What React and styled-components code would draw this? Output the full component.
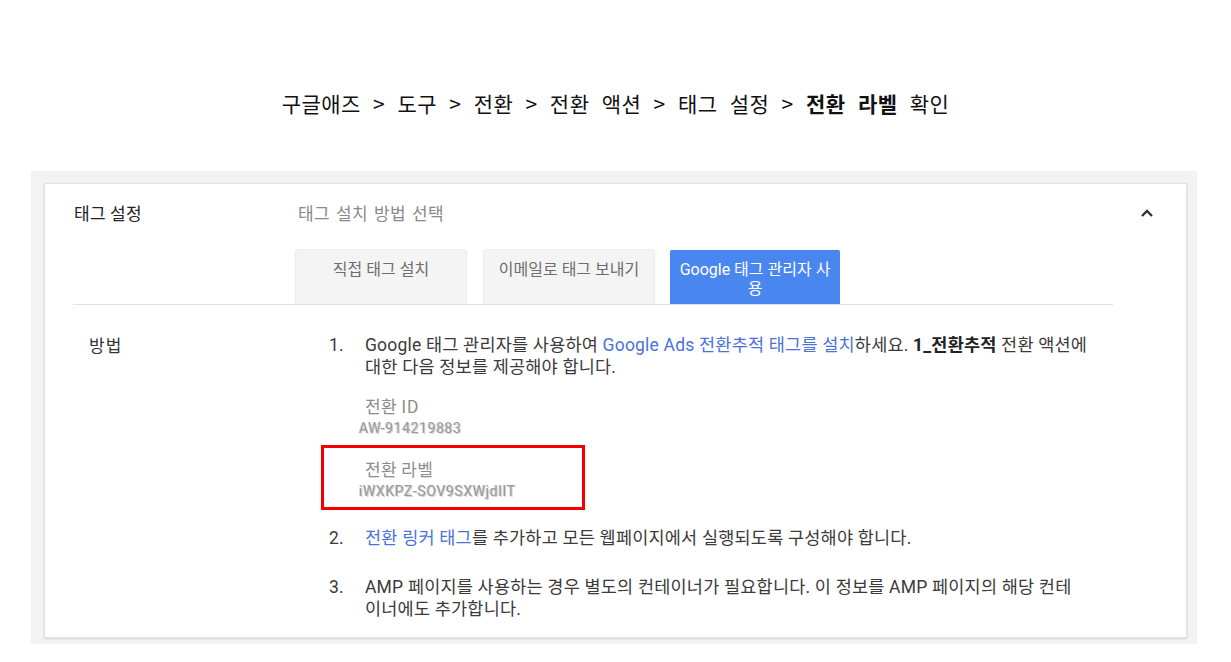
import React from "react";
import styled, { createGlobalStyle } from "styled-components";

const GlobalStyle = createGlobalStyle`
  html, body { margin: 0; padding: 0; background: #ffffff; }
  body { font-family: Roboto, "Noto Sans CJK KR", sans-serif; color: #333; }
`;

const Page = styled.div`
  width: 1231px;
  height: 662px;
  overflow: hidden;
  background: #fff;
`;

const Breadcrumb = styled.div`
  padding-top: 89px;
  height: 30px;
  text-align: center;
  font-family: "Noto Sans CJK KR", sans-serif;
  font-size: 21px;
  line-height: 28px;
  color: #111;
  letter-spacing: 0.5px;
  word-spacing: 7px;
  b { font-weight: 700; }
`;

const Panel = styled.div`
  margin: 52px 34px 0 31px;
  padding: 12px 10px 6px 13px;
  background: #f3f3f3;
`;

const Card = styled.div`
  background: #fff;
  border: 1px solid #e3e3e3;
  box-shadow: 0 1px 2px rgba(0, 0, 0, 0.12);
`;

const HeaderRow = styled.div`
  display: flex;
`;

const Header = styled.div`
  flex: 1;
  margin-left: 28px;
  display: flex;
  padding-top: 19px;
  border-bottom: 1px solid #e2e2e2;
`;

const SectionLabel = styled.div`
  width: 224px;
  padding-left: 1px;
  font-family: "Noto Sans CJK KR", sans-serif;
  font-size: 17px;
  line-height: 20px;
  letter-spacing: 0.3px;
  color: #222;
`;

const HeaderMain = styled.div`
  display: flex;
  flex-direction: column;
`;

const SubTitle = styled.div`
  font-family: "Noto Sans CJK KR", sans-serif;
  font-size: 17px;
  line-height: 20px;
  letter-spacing: 0.3px;
  word-spacing: 2px;
  color: #8a8a8a;
`;

const Tabs = styled.div`
  display: flex;
  gap: 18px;
  margin-top: 27px;
  margin-left: -2px;
`;

const Tab = styled.div`
  width: 170px;
  height: 54px;
  box-sizing: border-box;
  padding: 10px 8px 0;
  margin-left: ${(p) => (p.$active ? "-2px" : "0")};
  text-align: center;
  font-family: Roboto, "Noto Sans CJK KR", sans-serif;
  font-size: 16px;
  line-height: 19px;
  border-radius: 2px 2px 0 0;
  background: ${(p) => (p.$active ? "#4a86f0" : "#f4f4f4")};
  color: ${(p) => (p.$active ? "#ffffff" : "#6d6d6d")};
  box-shadow: ${(p) =>
    p.$active
      ? "0 0 1px rgba(0,0,0,0.2)"
      : "0 -1px 1px rgba(0,0,0,0.06), -1px 0 1px rgba(0,0,0,0.08), 1px 0 1px rgba(0,0,0,0.08)"};
`;

const ChevronCol = styled.div`
  width: 73px;
  display: flex;
  justify-content: center;
  padding-top: 24px;
  padding-right: 6px;
  box-sizing: border-box;
`;

const Body = styled.div`
  display: flex;
  padding: 29px 0 17px 44px;
`;

const BodyLabel = styled.div`
  width: 240px;
  font-family: "Noto Sans CJK KR", sans-serif;
  font-size: 17px;
  line-height: 22px;
  letter-spacing: 1px;
  color: #333;
`;

const Steps = styled.ol`
  list-style: none;
  margin: 0;
  padding: 0;
  width: 790px;
  display: flex;
  flex-direction: column;
`;

const Step = styled.li`
  display: flex;
  margin-top: ${(p) => p.$mt || 0}px;
  font-family: Roboto, "Noto Sans CJK KR", sans-serif;
  font-size: 17.5px;
  line-height: 22px;
  letter-spacing: 0.2px;
  color: #3a3a3a;
`;

const StepNum = styled.span`
  width: 36px;
  flex: none;
`;

const StepBody = styled.div`
  width: 754px;
`;

const Link = styled.span`
  color: #4a72d8;
`;

const Strong = styled.b`
  font-weight: 700;
  color: #222;
`;

const Field = styled.div`
  margin-top: ${(p) => p.$mt || 0}px;
`;

const FieldLabel = styled.div`
  font-family: "Noto Sans CJK KR", sans-serif;
  font-size: 17px;
  line-height: 22px;
  letter-spacing: 0.4px;
  color: #8c8c8c;
`;

const FieldValue = styled.div`
  font-family: Roboto, sans-serif;
  font-size: 14px;
  line-height: 22px;
  color: #9a9a9a;
  margin-left: -6px;
  letter-spacing: 0.6px;
  filter: blur(0.6px);
  text-shadow: 1px 1px 0 #ccd5e6, -1px 0 0 #e6d8ca;
`;

const Highlight = styled.div`
  margin: 6px 0 0 -44px;
  width: 264px;
  height: 65px;
  box-sizing: border-box;
  border: 3px solid #f20000;
  padding: 10px 0 0 41px;
`;

const ChevronUp = () => (
  <svg width="14" height="10" viewBox="0 0 14 10" aria-hidden="true">
    <polyline points="2,8 7,3 12,8" fill="none" stroke="#333" strokeWidth="2.4" />
  </svg>
);

export default function App() {
  return (
    <Page>
      <GlobalStyle />
      <Breadcrumb>
        구글애즈 &gt; 도구 &gt; 전환 &gt; 전환 액션 &gt; 태그 설정 &gt; <b>전환 라벨</b> 확인
      </Breadcrumb>
      <Panel>
        <Card>
          <HeaderRow>
            <Header>
              <SectionLabel>태그 설정</SectionLabel>
              <HeaderMain>
                <SubTitle>태그 설치 방법 선택</SubTitle>
                <Tabs>
                  <Tab>직접 태그 설치</Tab>
                  <Tab>이메일로 태그 보내기</Tab>
                  <Tab $active>Google 태그 관리자 사용</Tab>
                </Tabs>
              </HeaderMain>
            </Header>
            <ChevronCol>
              <ChevronUp />
            </ChevronCol>
          </HeaderRow>
          <Body>
            <BodyLabel>방법</BodyLabel>
            <Steps>
              <Step>
                <StepNum>1.</StepNum>
                <StepBody>
                  Google 태그 관리자를 사용하여 <Link>Google Ads 전환추적 태그를 설치</Link>하세요.{" "}
                  <Strong>1_전환추적</Strong> 전환 액션에
                  <br />
                  대한 다음 정보를 제공해야 합니다.
                  <Field $mt={17}>
                    <FieldLabel>전환 ID</FieldLabel>
                    <FieldValue>AW-914219883</FieldValue>
                  </Field>
                  <Highlight>
                    <FieldLabel>전환 라벨</FieldLabel>
                    <FieldValue>iWXKPZ-SOV9SXWjdIlT</FieldValue>
                  </Highlight>
                </StepBody>
              </Step>
              <Step $mt={17}>
                <StepNum>2.</StepNum>
                <StepBody>
                  <Link>전환 링커 태그</Link>를 추가하고 모든 웹페이지에서 실행되도록 구성해야 합니다.
                </StepBody>
              </Step>
              <Step $mt={27}>
                <StepNum>3.</StepNum>
                <StepBody>
                  AMP 페이지를 사용하는 경우 별도의 컨테이너가 필요합니다. 이 정보를 AMP 페이지의 해당 컨테
                  <br />
                  이너에도 추가합니다.
                </StepBody>
              </Step>
            </Steps>
          </Body>
        </Card>
      </Panel>
    </Page>
  );
}
